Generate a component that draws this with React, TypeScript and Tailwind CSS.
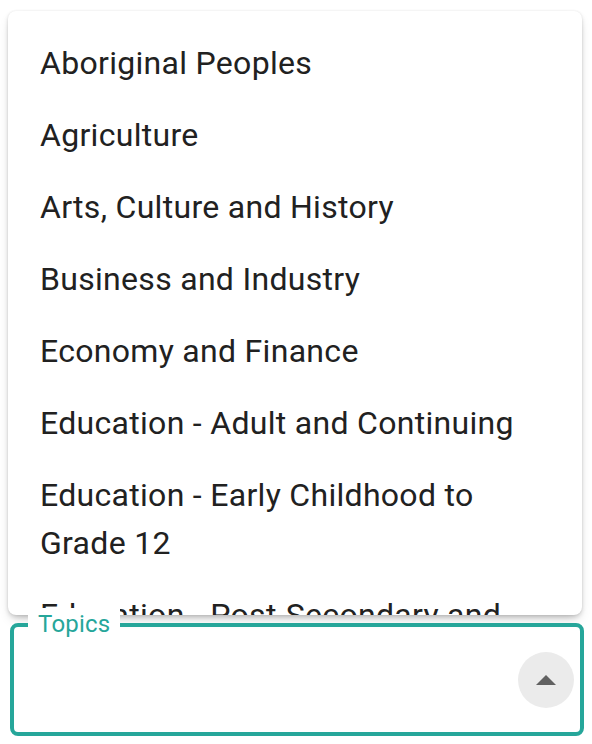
import React from 'react';

const topics = [
  'Aboriginal Peoples',
  'Agriculture',
  'Arts, Culture and History',
  'Business and Industry',
  'Economy and Finance',
  'Education - Adult and Continuing',
  'Education - Early Childhood to Grade 12',
  'Education - Post-Secondary and Skills Training',
  'Employment and Labour',
];

export default function App() {
  return (
    <div className="min-h-[744px] w-[592px] bg-white pt-[11px] font-['Roboto',sans-serif]">
      {/* dropdown menu */}
      <div className="ml-[8px] h-[604px] w-[574px] overflow-hidden rounded-lg bg-white shadow-[0_6px_12px_-4px_rgba(0,0,0,0.25),0_2px_4px_rgba(0,0,0,0.12),0_0_2px_rgba(0,0,0,0.08)]">
        <ul className="py-4">
          {topics.map((topic) => (
            <li
              key={topic}
              className="px-8 py-3 text-[32px] leading-[48px] tracking-[0.00938em] text-[#212121]"
            >
              {topic}
            </li>
          ))}
        </ul>
      </div>

      {/* outlined field */}
      <div className="relative ml-[10px] mt-[8px] flex h-[113px] w-[574px] items-center justify-end rounded-lg border-4 border-[#26a69a] pr-[6px]">
        <span className="absolute left-[14px] top-[-19px] bg-white px-[10px] text-[24px] leading-[32px] tracking-[0.00938em] text-[#26a69a]">
          Topics
        </span>
        <button
          type="button"
          className="flex h-[56px] w-[56px] items-center justify-center rounded-full bg-[#ebebeb]"
        >
          <svg width="20" height="10" viewBox="0 0 20 10">
            <path d="M0 10 L10 0 L20 10 Z" fill="#616161" />
          </svg>
        </button>
      </div>
    </div>
  );
}
